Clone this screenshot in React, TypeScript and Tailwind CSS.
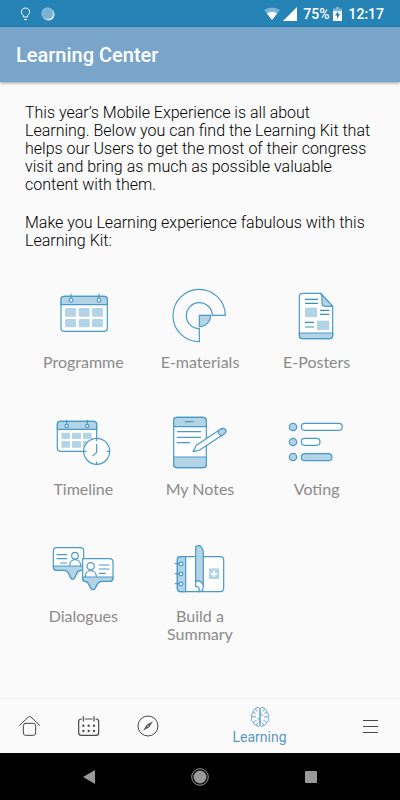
import type { ReactNode } from "react";

const LINE = "#4a9ac9";
const FILL = "#b3d4e6";

type KitIconProps = { viewBox: string; children: ReactNode };

const KitIcon = ({ viewBox, children }: KitIconProps) => (
  <svg
    className="w-[100px] h-[72px]"
    viewBox={viewBox}
    fill="none"
    stroke={LINE}
    strokeWidth="3.6"
    strokeLinecap="round"
    strokeLinejoin="round"
    aria-hidden="true"
  >
    {children}
  </svg>
);

const ProgrammeIcon = () => (
  <KitIcon viewBox="-21 0 300 216">
    <rect x="63" y="49" width="139" height="105" rx="9" fill="#fff" />
    <path d="M63 74V58q0-9 9-9h121q9 0 9 9v16z" fill={FILL} />
    <g fill={FILL} stroke="none">
      <rect x="75" y="84" width="33" height="26" rx="3" />
      <rect x="116" y="84" width="33" height="26" rx="3" />
      <rect x="156" y="84" width="33" height="26" rx="3" />
      <rect x="75" y="117" width="33" height="25" rx="3" />
      <rect x="116" y="117" width="33" height="25" rx="3" />
      <rect x="156" y="117" width="33" height="25" rx="3" />
    </g>
    <path d="M93 43v13M177 43v13" />
    <circle cx="93" cy="61" r="5.5" fill="#fff" />
    <circle cx="177" cy="61" r="5.5" fill="#fff" />
  </KitIcon>
);

const MaterialsIcon = () => (
  <KitIcon viewBox="0 0 300 216">
    <path
      strokeLinejoin="miter"
      d="M226 106A78.500 78.500 0 1 0 148 185V146A39 39 0 1 1 187 106z"
    />
    <path strokeLinejoin="miter" fill={FILL} d="M148 106h34a34 34 0 0 1-34 34z" />
  </KitIcon>
);

const PostersIcon = () => (
  <KitIcon viewBox="-9 0 300 216">
    <path d="M98 40h54l36 39v87q0 10-10 10H98q-10 0-10-10V50q0-10 10-10z" fill="#fff" />
    <path d="M88 159h100v7q0 10-10 10H98q-10 0-10-10z" fill={FILL} />
    <path d="M152 40l36 39h-23q-9 0-9-9V54q0-8-4-14z" fill={FILL} />
    <g fill={FILL} stroke="none">
      <rect x="105" y="83" width="36" height="28" />
      <rect x="141" y="122" width="37" height="28" />
    </g>
    <g stroke="#3490c4" strokeLinecap="butt">
      <path d="M105 58h39M105 70h39M150 91h28M150 103h28M105 127h27M105 141h27" />
    </g>
  </KitIcon>
);

const TimelineIcon = () => (
  <KitIcon viewBox="-21 6 300 216">
    <rect x="52" y="49" width="118" height="90" rx="9" fill="#fff" />
    <path d="M52 73V58q0-9 9-9h100q9 0 9 9v15z" fill={FILL} />
    <g fill={FILL} stroke="none">
      <rect x="64" y="83" width="26" height="19" rx="2" />
      <rect x="96" y="83" width="27" height="19" rx="2" />
      <rect x="129" y="83" width="26" height="19" rx="2" />
      <rect x="64" y="108" width="26" height="20" rx="2" />
      <rect x="96" y="108" width="27" height="20" rx="2" />
      <rect x="129" y="108" width="26" height="20" rx="2" />
    </g>
    <path d="M80 46v12M142 46v12" />
    <circle cx="80" cy="63" r="5" fill="#fff" />
    <circle cx="142" cy="63" r="5" fill="#fff" />
    <circle cx="170" cy="139" r="39" fill="#fff" />
    <path d="M170 118v24l-11 10M170 101v6M170 171v6M132 139h6M202 139h6" />
  </KitIcon>
);

const NotesIcon = () => (
  <KitIcon viewBox="0 6 300 216">
    <rect x="71" y="37" width="98" height="151" rx="10" fill="#fff" />
    <path d="M71 65V47q0-10 10-10h78q10 0 10 10v18z" fill={FILL} />
    <path d="M71 156h98v22q0 10-10 10H81q-10 0-10-10z" fill={FILL} />
    <path d="M106 50h24M82 80h70M82 97h70M82 113h37" />
    <path
      d="M130 138l9-17 74-49q8-5 13 2t-4 13l-73 48-17 4q-4 1-2-1z"
      fill="#fff"
    />
    <path d="M204 78l9-6q8-5 13 2t-4 13l-9 6q-8-5-9-15z" fill={FILL} />
  </KitIcon>
);

const VotingIcon = () => (
  <KitIcon viewBox="-9 6 300 216">
    <circle cx="69" cy="66" r="11" fill={FILL} />
    <circle cx="69" cy="111" r="11" fill={FILL} />
    <circle cx="69" cy="156" r="11" fill={FILL} />
    <rect x="94" y="55" width="123" height="21" rx="10.500" fill="#fff" />
    <rect x="94" y="100" width="56" height="21" rx="10.500" fill="#fff" />
    <rect x="94" y="146" width="92" height="21" rx="10.500" fill={FILL} />
  </KitIcon>
);

const DialoguesIcon = () => (
  <KitIcon viewBox="-21 -3 300 216">
    <path
      d="M50 38h71q10 0 10 10v58h-8c-12 0-13 9-18 20-4 9-10 9-14 0-5-11-7-20-19-20H50q-10 0-10-10V48q0-10 10-10z"
      fill="#fff"
    />
    <path
      d="M40 93h91v13h-8c-12 0-13 9-18 20-4 9-10 9-14 0-5-11-7-20-19-20H50q-10 0-10-13z"
      fill={FILL}
    />
    <circle cx="105" cy="62" r="10" />
    <path d="M89 92c0-24 33-24 33 0M51 59h29M51 71h29M62 84h18" />
    <path
      d="M128 71h81q10 0 10 10v48q0 10-10 10h-24c-11 0-13 8-18 18-4 9-12 9-16 0-5-10-6-18-16-18-5 0-7-4-7-10z"
      fill="#fff"
    />
    <path
      d="M128 126h91v3q0 10-10 10h-24c-11 0-13 8-18 18-4 9-12 9-16 0-5-10-6-18-16-18-5 0-7-4-7-13z"
      fill={FILL}
    />
    <circle cx="152" cy="94" r="11" />
    <path d="M136 125c0-24 33-24 33 0M178 90h29M178 102h29M178 115h18" />
  </KitIcon>
);

const SummaryIcon = () => (
  <KitIcon viewBox="0 -3 300 216">
    <rect x="82" y="65" width="139" height="105" rx="10" fill="#fff" />
    <path d="M107 65v105H92q-10 0-10-10V75q0-10 10-10z" fill={FILL} />
    <g fill="#fff">
      <circle cx="93" cy="87" r="5.500" />
      <circle cx="93" cy="117" r="5.500" />
      <circle cx="93" cy="147" r="5.500" />
    </g>
    <path d="M76 86h11M76 116h11M76 146h11" />
    <path d="M137 139V36c3-6 14-5 18 1q5 6 5 14v104c-2-12-12-19-23-16z" fill={FILL} />
    <path d="M137 139c11-4 23 3 23 16 0 9-6 15-15 15 6-8 2-16-8-16z" fill="#fff" />
    <rect x="177" y="100" width="31" height="32" fill={FILL} stroke="none" />
    <path d="M192 109v15M184 117h16" stroke="#fff" strokeWidth="5" />
  </KitIcon>
);

const kit = [
  { label: "Programme", icon: <ProgrammeIcon /> },
  { label: "E-materials", icon: <MaterialsIcon /> },
  { label: "E-Posters", icon: <PostersIcon /> },
  { label: "Timeline", icon: <TimelineIcon /> },
  { label: "My Notes", icon: <NotesIcon /> },
  { label: "Voting", icon: <VotingIcon /> },
  { label: "Dialogues", icon: <DialoguesIcon /> },
  { label: "Build a Summary", icon: <SummaryIcon /> },
];

const StatusBar = () => (
  <div className="flex items-center justify-between h-[27px] pl-5 pr-4 bg-[#2683b6] text-white">
    <div className="flex items-center gap-2.5">
      <svg className="w-[11px] h-[14px]" viewBox="0 0 11 14" fill="none" stroke="#fff" aria-hidden="true">
        <path d="M3.500 10V8.500C0 6.500 1 1 5.500 1S11 6.500 7.500 8.500V10zM4 12.500h3" />
      </svg>
      <svg className="w-[14px] h-[14px]" viewBox="0 0 14 14" aria-hidden="true">
        <circle cx="7.500" cy="7.500" r="6" fill="#fff" />
        <circle cx="6.500" cy="6.500" r="6" fill="#79b2d3" />
        <circle cx="6.500" cy="6.500" r="5.500" fill="none" stroke="#b5d5e7" strokeDasharray="1 1" />
      </svg>
    </div>
    <div className="flex items-center text-sm font-medium">
      <svg className="w-4 h-[14px] mr-[3px]" viewBox="0 0 16 14" aria-hidden="true">
        <path d="M0 3Q8-2 16 3L8 13z" fill="#7db5d4" />
        <path d="M3 6.500Q8 3 13 6.500L8 13z" fill="#fff" />
      </svg>
      <svg className="w-[14px] h-[14px] mr-1.5" viewBox="0 0 14 14" aria-hidden="true">
        <path d="M14 0v14H0z" fill="#fff" />
      </svg>
      <span>75%</span>
      <svg className="w-[9px] h-[14px] ml-1 mr-1.5" viewBox="0 0 9 14" aria-hidden="true">
        <path d="M3 0h3v1.500h3V4H0V1.500h3z" fill="#7db5d4" />
        <path d="M0 4h9v10H0z" fill="#fff" />
        <path d="M5.500 3.500L2 8.500h2V12l3-5H5z" fill="#2683b6" />
      </svg>
      <span>12:17</span>
    </div>
  </div>
);

const BrainIcon = () => (
  <svg
    className="w-[20px] h-[22px]"
    viewBox="0 0 60 66"
    fill="none"
    stroke="#5a9dcb"
    strokeWidth="2.600"
    strokeLinecap="round"
    strokeLinejoin="round"
    aria-hidden="true"
  >
    <path d="M29 8c-2-6-12-5-12 1-6 0-9 5-7 10-7 3-8 11-4 15-5 6-1 14 5 15-1 7 6 10 10 9 2 6 8 5 8-1z" />
    <path d="M31 8c2-6 12-5 12 1 6 0 9 5 7 10 7 3 8 11 4 15 5 6 1 14-5 15 1 7-6 10-10 9-2 6-8 5-8-1z" />
    <path d="M17 9c0 4 2 6 5 6M10 19c3 0 5 1 6 4M6 34c4-4 8-4 11-1M11 49c1-4 4-6 8-5M21 58c-2-3-1-6 2-7M28 40c-3 0-5-1-6-3" />
    <path d="M43 9c0 4-2 6-5 6M50 19c-3 0-5 1-6 4M54 34c-4-4-8-4-11-1M49 49c-1-4-4-6-8-5M39 58c2-3 1-6-2-7M32 24c4 0 6 2 6 5" />
  </svg>
);

const TabBar = () => (
  <nav className="flex h-[55px] border-t border-[#eeeeee]">
    <button className="flex items-center justify-center w-[59px]" aria-label="Home">
      <svg className="w-[22px] h-[22px]" viewBox="0 0 66 66" fill="none" stroke="#484848" strokeWidth="3" strokeLinecap="round" aria-hidden="true">
        <path d="M2 31L28 6q4-4 8 0l26 25" />
        <rect x="13" y="25" width="37" height="36" rx="7" />
      </svg>
    </button>
    <button className="flex items-center justify-center w-[59px]" aria-label="Calendar">
      <svg className="w-[22px] h-[22px]" viewBox="0 0 66 66" fill="none" stroke="#484848" strokeWidth="3.600" strokeLinecap="round" aria-hidden="true">
        <path d="M10 12q-8 0-8 8v33q0 8 8 8h44q8 0 8-8V20q0-8-8-8M22 12h20M16 5v13M48 5v13" />
        <g strokeWidth="7">
          <path d="M16 32h.1M32 32h.1M48 32h.1M16 48h.1M32 48h.1M48 48h.1" />
        </g>
      </svg>
    </button>
    <button className="flex items-center justify-center w-[60px]" aria-label="Explore">
      <svg className="w-[22px] h-[22px]" viewBox="0 0 66 66" fill="none" stroke="#484848" strokeWidth="3" aria-hidden="true">
        <circle cx="33" cy="33" r="30" />
        <path d="M48 19L37 37 18 47l11-18z" fill="#585858" stroke="none" />
        <circle cx="33" cy="33" r="2" fill="#fafafa" stroke="none" />
      </svg>
    </button>
    <button className="flex flex-col items-center justify-center flex-1 text-[#5a97c5]">
      <BrainIcon />
      <span className="text-sm leading-[18px] font-normal">Learning</span>
    </button>
    <button className="flex items-center justify-center w-[59px]" aria-label="Menu">
      <svg className="w-4 h-4" viewBox="0 0 16 16" stroke="#484848" aria-hidden="true">
        <path d="M0 2.500h15M0 8.500h15M0 14.500h15" />
      </svg>
    </button>
  </nav>
);

const SystemBar = () => (
  <div className="grid grid-cols-3 items-center justify-items-center h-[47px] px-[34px] bg-black">
    <button aria-label="Back">
      <svg className="w-3 h-[14px]" viewBox="0 0 12 14" fill="#999" aria-hidden="true">
        <path d="M12 0v14L0 7z" />
      </svg>
    </button>
    <button aria-label="Home screen">
      <svg className="w-[18px] h-[18px]" viewBox="0 0 18 18" fill="#999" aria-hidden="true">
        <circle cx="9" cy="9" r="6.500" />
        <circle cx="9" cy="9" r="8.300" fill="none" stroke="#999" />
      </svg>
    </button>
    <button aria-label="Recent apps">
      <svg className="w-3 h-3" viewBox="0 0 12 12" fill="#999" aria-hidden="true">
        <rect width="12" height="12" rx="1" />
      </svg>
    </button>
  </div>
);

const App = () => {
  return (
    <div className="flex flex-col min-h-screen bg-[#fafafa] font-['Roboto',sans-serif]">
      <StatusBar />
      <header className="relative flex items-center h-[55px] px-4 bg-[#79a5cb] shadow-[0_1px_3px_rgba(0,0,0,0.4)]">
        <h1 className="text-xl font-medium text-white">Learning Center</h1>
      </header>

      <main className="flex-1">
        <div className="px-[25px] pt-[22px] text-base leading-[18px] font-light text-black">
          <p>
            This year’s Mobile Experience is all about Learning. Below you can
            find the Learning Kit that helps our Users to get the most of their
            congress visit and bring as much as possible valuable content with
            them.
          </p>
          <p className="mt-5">
            Make you Learning experience fabulous with this Learning Kit:
          </p>
        </div>

        <div className="grid grid-cols-3 gap-y-9 px-[25px] mt-[30px]">
          {kit.map((item) => (
            <button key={item.label} className="flex flex-col items-center">
              {item.icon}
              <span className="max-w-[100px] mt-px font-['Lato',sans-serif] text-base leading-[18px] text-center text-[#8a8a8a]">
                {item.label}
              </span>
            </button>
          ))}
        </div>
      </main>

      <TabBar />
      <SystemBar />
    </div>
  );
};

export default App;
